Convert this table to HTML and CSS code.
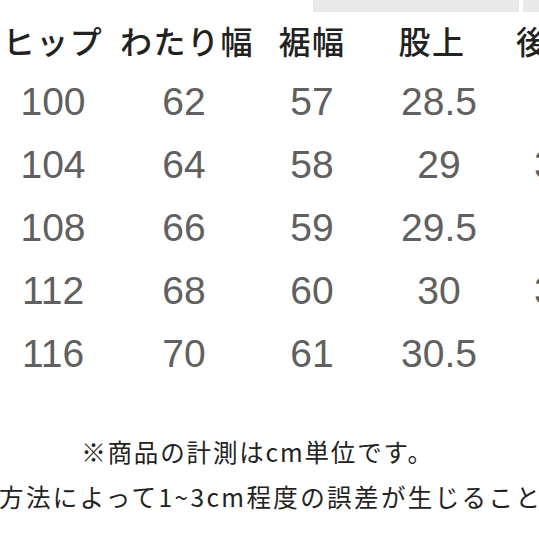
FILE: index.html
```html
<!DOCTYPE html>
<html lang="ja">
<head>
<meta charset="utf-8">
<link rel="stylesheet" href="styles.css">
</head>
<body>
<div class="page">
  <div class="topbar">
    <div class="tab tab-main"></div>
    <div class="tab tab-side"></div>
  </div>
  <div class="table">
    <div class="row head">
      <div class="cell c1">ヒップ</div>
      <div class="cell c2">わたり幅</div>
      <div class="cell c3">裾幅</div>
      <div class="cell c4">股上</div>
      <div class="cell c5">後ろ股上</div>
    </div>
    <div class="row data">
      <div class="cell c1">100</div><div class="cell c2">62</div><div class="cell c3">57</div><div class="cell c4">28.5</div><div class="cell c5">36</div>
    </div>
    <div class="row data">
      <div class="cell c1">104</div><div class="cell c2">64</div><div class="cell c3">58</div><div class="cell c4">29</div><div class="cell c5">36.5</div>
    </div>
    <div class="row data">
      <div class="cell c1">108</div><div class="cell c2">66</div><div class="cell c3">59</div><div class="cell c4">29.5</div><div class="cell c5">37</div>
    </div>
    <div class="row data">
      <div class="cell c1">112</div><div class="cell c2">68</div><div class="cell c3">60</div><div class="cell c4">30</div><div class="cell c5">37.5</div>
    </div>
    <div class="row data">
      <div class="cell c1">116</div><div class="cell c2">70</div><div class="cell c3">61</div><div class="cell c4">30.5</div><div class="cell c5">38</div>
    </div>
  </div>
  <div class="notes">
    <p class="note note-1">※商品の計測はcm単位です。</p>
    <p class="note note-2">方法によって1~3cm程度の誤差が生じることがあります。</p>
  </div>
</div>
</body>
</html>
```

FILE: styles.css
```css
html, body {
  margin: 0;
  padding: 0;
  background: #ffffff;
  overflow: hidden;
  width: 539px;
  height: 539px;
}

.page {
  width: 539px;
  height: 539px;
  overflow: hidden;
}

.topbar {
  display: flex;
  height: 12px;
  padding-left: 313px;
  gap: 4px;
}

.tab {
  background: #e9e9e9;
  height: 12px;
  flex: none;
}

.tab-main { width: 206px; }
.tab-side { width: 40px; }

.table {
  display: flex;
  flex-direction: column;
}

.row {
  display: grid;
  grid-template-columns: 106px 156px 100px 154px 112px;
  width: 628px;
  align-items: center;
  box-sizing: border-box;
}

.cell {
  text-align: center;
  white-space: nowrap;
}

.head {
  height: 58px;
  padding-bottom: 3px;
  font-family: "Noto Sans CJK JP", "Noto Sans", sans-serif;
  font-weight: 500;
  font-size: 32px;
  letter-spacing: 1.5px;
  color: #222222;
}

.head .c2 { padding-left: 6px; }
.head .c4 { padding-right: 14px; }

.data {
  height: 63px;
  font-family: "Liberation Sans", Arial, sans-serif;
  font-size: 39px;
  color: #606060;
}

.notes {
  margin-top: 44px;
  font-family: "Noto Sans CJK JP", "Noto Sans", sans-serif;
  font-size: 24.5px;
  letter-spacing: 1.85px;
  color: #222222;
}

.note {
  margin: 0;
  height: 45px;
  line-height: 45px;
  white-space: nowrap;
}

.note-1 {
  text-align: center;
  padding-right: 24px;
}

.note-2 {
  margin-left: -1px;
  letter-spacing: 2.4px;
}
```
